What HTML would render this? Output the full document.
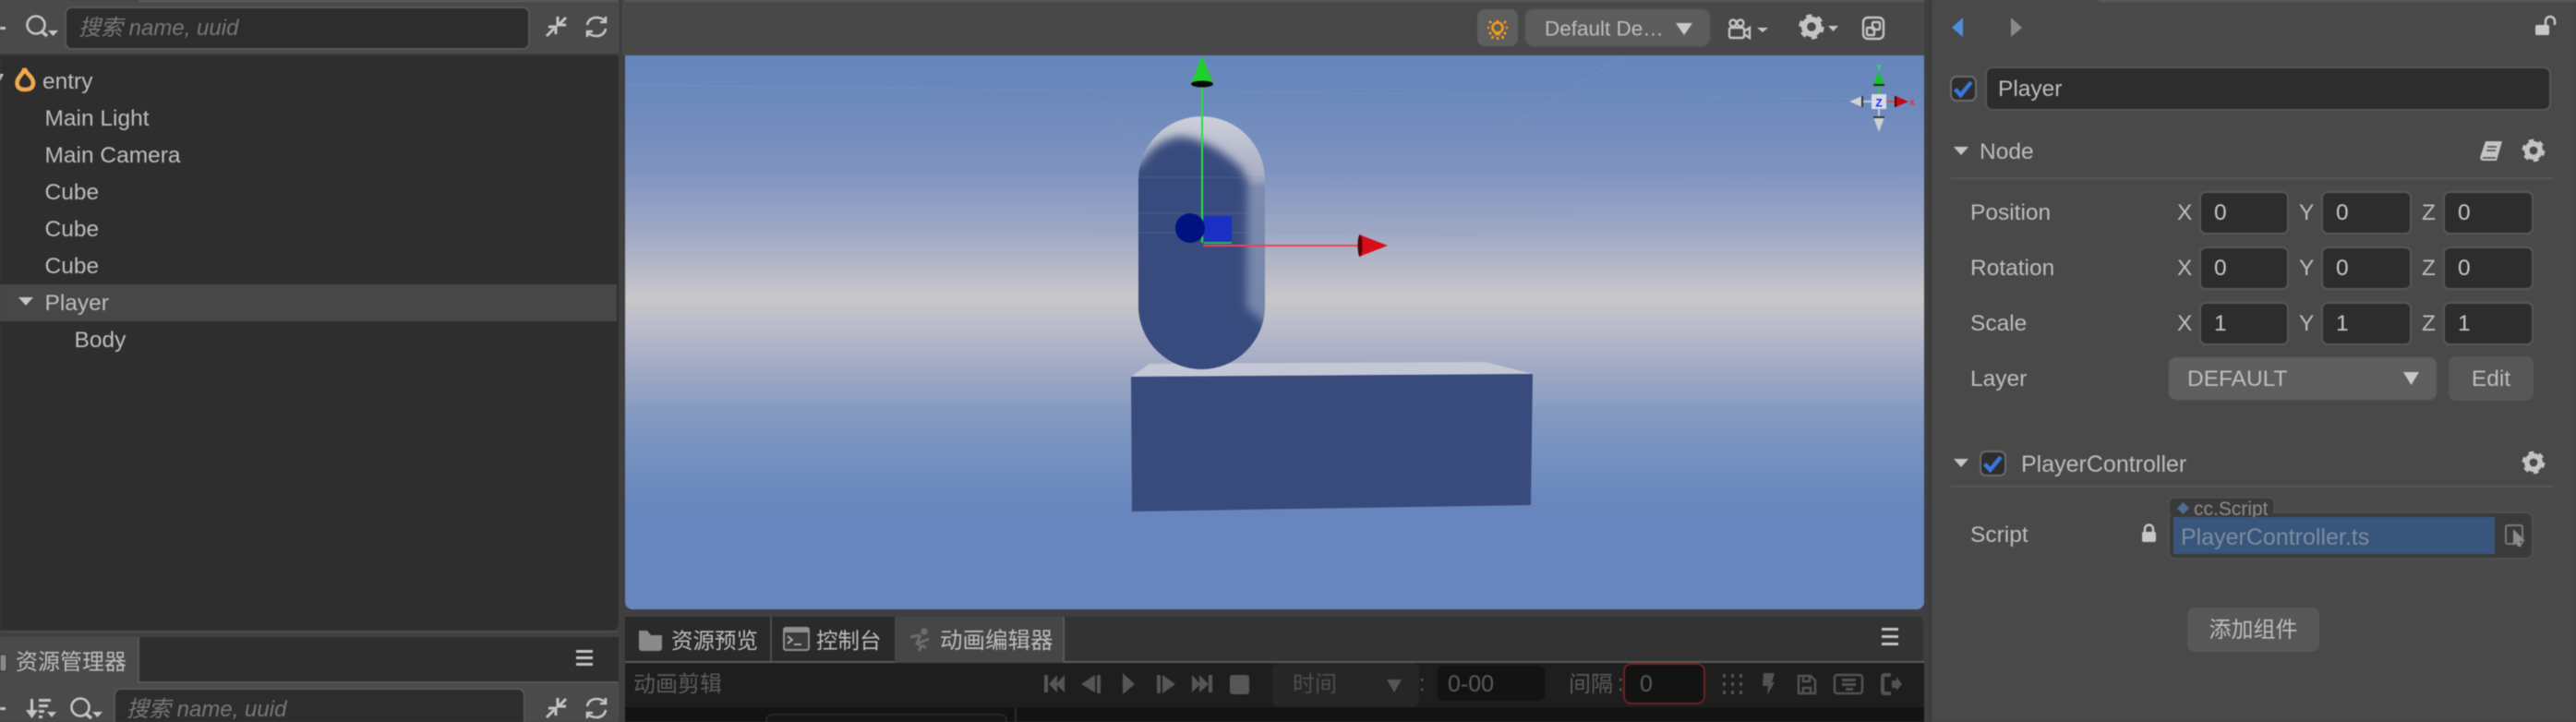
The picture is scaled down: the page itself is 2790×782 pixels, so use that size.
<!DOCTYPE html>
<html><head><meta charset="utf-8"><style>
html,body{margin:0;padding:0;background:#3f3f3f;width:2790px;height:782px;overflow:hidden}
svg{display:block;filter:blur(.55px)}
text{font-family:"Liberation Sans","Noto Sans CJK SC",sans-serif;font-size:24.5px;fill:#bdbdbd;white-space:pre}
.ph{font-size:24px;font-style:italic;fill:#777}
.dim{fill:#5a5a5a;font-size:24px}
.inp{fill:#2d2d2d;stroke:#575757;stroke-width:2}
</style></head><body>
<svg width="2790" height="782" viewBox="0 0 2790 782" xmlns="http://www.w3.org/2000/svg">
<defs>
<linearGradient id="sky" gradientUnits="userSpaceOnUse" x1="0" y1="60" x2="0" y2="660">
<stop offset="0" stop-color="#6586bd"/>
<stop offset=".07" stop-color="#6a88bc"/>
<stop offset=".205" stop-color="#7f93c0"/>
<stop offset=".317" stop-color="#9ea8c5"/>
<stop offset=".388" stop-color="#b8bac8"/>
<stop offset=".438" stop-color="#c8c8c8"/>
<stop offset=".483" stop-color="#bcbdca"/>
<stop offset=".55" stop-color="#a6adc6"/>
<stop offset=".65" stop-color="#8399c2"/>
<stop offset=".733" stop-color="#7390c0"/>
<stop offset=".817" stop-color="#6786bd"/>
<stop offset="1" stop-color="#6786bd"/>
</linearGradient>
<linearGradient id="capL" gradientUnits="userSpaceOnUse" x1="0" y1="126" x2="0" y2="345">
<stop offset="0" stop-color="#ced0d9"/>
<stop offset=".3" stop-color="#a8aec5"/>
<stop offset=".35" stop-color="#7e8dae"/>
<stop offset="1" stop-color="#7686aa"/>
</linearGradient>
<clipPath id="cap"><rect x="1233" y="126" width="137" height="274" rx="68.5"/></clipPath>
<filter id="b5" x="-20%" y="-20%" width="140%" height="140%"><feGaussianBlur stdDeviation="5"/></filter>
<clipPath id="sceneClip"><path d="M677 60H2084V652a8 8 0 0 1-8 8H685a8 8 0 0 1-8-8Z"/></clipPath>
<g id="gear"><circle r="7.2" fill="none" stroke="#c4c4c4" stroke-width="5.6"/><circle r="10.6" fill="none" stroke="#c4c4c4" stroke-width="3.6" stroke-dasharray="5.5 5.6"/></g>
<g id="collapse" fill="none" stroke="#c4c4c4" stroke-width="3"><path d="M1 21L9 13M3 11H11V19" /><path d="M22 1L14 9M22 9H13V0"/></g>
<g id="refresh" fill="none" stroke="#c4c4c4" stroke-width="2.6"><path d="M1 9C2 3 7 1 11 1C15 1 18 2 21 5M21 0V6H15"/><path d="M21 13C20 19 15 21 11 21C7 21 4 20 1 17M1 22V16H7"/></g>
<g id="cbox"><rect x="1" y="1" width="27" height="26" rx="6" fill="#2d2d2d" stroke="#6a6a6a" stroke-width="2"/><path d="M5.5 14.5L11.5 21L23 7" fill="none" stroke="#3a76dc" stroke-width="4.5"/></g>
</defs>

<rect width="2790" height="782" fill="#3f3f3f"/>

<!-- LEFT top panel -->
<rect x="0" y="0" width="670" height="59" fill="#4a4a4a"/>
<rect x="150" y="0" width="520" height="2" fill="#5c5c5c"/>
<rect x="0" y="59" width="670" height="624" fill="#2e2e2e"/>
<rect x="0" y="58" width="670" height="2" fill="#3c3c3c"/>
<path d="M662 683H670V675a8 8 0 0 1-8 8Z" fill="#3f3f3f"/>
<rect x="0" y="683" width="670" height="2" fill="#4b4b4b"/>
<rect x="0" y="29" width="6" height="3" fill="#c4c4c4"/>
<g fill="none" stroke="#c4c4c4" stroke-width="2.6"><circle cx="39" cy="27" r="9.5"/><path d="M45 34L51 39" stroke-width="3.5"/></g>
<path d="M52 33H63L57.5 39Z" fill="#c4c4c4"/>
<rect x="71" y="8" width="502" height="45" rx="7" class="inp"/>
<text x="85" y="38" class="ph">搜索 name, uuid</text>
<use href="#collapse" x="591" y="18"/>
<use href="#refresh" x="635" y="18"/>

<path d="M0 80H4L0 88Z" fill="#c4c4c4"/>
<path d="M26.500 74C26 80 18.500 83 18.500 90C18.500 95 22 97 27 97C32.500 97 36 95 36 90C36 83 28 80 26.500 74Z" fill="none" stroke="#f0a94c" stroke-width="4.600"/>
<text x="46" y="96">entry</text>
<text x="48.500" y="136">Main Light</text>
<text x="48.500" y="176">Main Camera</text>
<text x="48.500" y="216">Cube</text>
<text x="48.500" y="256">Cube</text>
<text x="48.500" y="296">Cube</text>
<rect x="0" y="308" width="668" height="40" fill="#474747"/>
<path d="M20 322H36L28 331Z" fill="#c4c4c4"/>
<text x="48.500" y="336">Player</text>
<text x="80.500" y="376">Body</text>

<!-- LEFT bottom panel -->
<rect x="0" y="690" width="670" height="49" fill="#2e2e2e"/>
<rect x="0" y="690" width="149" height="50" fill="#4a4a4a"/>
<rect x="149" y="690" width="2" height="50" fill="#575757"/>
<rect x="149" y="738" width="521" height="2" fill="#575757"/>
<rect x="0" y="740" width="670" height="42" fill="#4a4a4a"/>
<rect x="0" y="709" width="7" height="18" rx="2" fill="#8a8a8a" stroke="#333" stroke-width="1"/>
<text x="17" y="725" style="font-size:24px">资源管理器</text>
<g fill="#c4c4c4"><rect x="624" y="704" width="18" height="3"/><rect x="624" y="711" width="18" height="3"/><rect x="624" y="718" width="18" height="3"/></g>
<rect x="0" y="766" width="6" height="3" fill="#c4c4c4"/>
<g fill="#c4c4c4"><rect x="33" y="757" width="3" height="16"/><path d="M28 769H41L34.500 778Z"/><rect x="42" y="757" width="13" height="3"/><rect x="42" y="763" width="10" height="3"/><rect x="42" y="769" width="6" height="3"/><rect x="42" y="775" width="4" height="3"/><path d="M51 771H61L56 777Z"/></g>
<g fill="none" stroke="#c4c4c4" stroke-width="2.6"><circle cx="87" cy="766" r="9.500"/><path d="M93 773L99 778" stroke-width="3.5"/></g>
<path d="M100 771H111L105.500 777Z" fill="#c4c4c4"/>
<rect x="124" y="746" width="444" height="50" rx="7" class="inp"/>
<text x="137" y="776" class="ph">搜索 name, uuid</text>
<use href="#collapse" x="591" y="756"/>
<use href="#refresh" x="635" y="756"/>

<!-- CENTER toolbar -->
<rect x="677" y="0" width="1407" height="60" fill="#484848"/>
<rect x="677" y="0" width="1407" height="2" fill="#5a5a5a"/>
<rect x="674" y="0" width="3" height="60" fill="#4a4a4a"/>
<rect x="1600" y="10" width="44" height="40" rx="8" fill="#5e5e5e"/>
<g fill="none" stroke="#f39c1e" stroke-width="2.6"><circle cx="1622" cy="30" r="5.500"/><path d="M1619 37H1625M1611 30H1613M1631 30H1633M1613 23L1615 25M1631 23L1629 25M1613 37L1615 35M1631 37L1629 35M1622 22V24"/><path d="M1622 40V43M1617 39L1616 42M1627 39L1628 42"/></g>
<rect x="1652" y="10" width="200" height="40" rx="9" fill="#5d5d5d" stroke="#545454" stroke-width="2"/>
<text x="1673" y="38.500" style="font-size:22.500px">Default De…</text>
<path d="M1815 25H1833L1824 38Z" fill="#c8c8c8"/>
<g fill="none" stroke="#c4c4c4" stroke-width="2.400"><rect x="1873" y="30" width="16" height="11" rx="2"/><circle cx="1877" cy="25" r="3.500"/><circle cx="1885" cy="25" r="3.500"/><path d="M1889 34L1895 30V41L1889 37"/></g>
<path d="M1903 30H1915L1909 35Z" fill="#c4c4c4"/>
<g transform="translate(1962 29) scale(1.100)"><use href="#gear"/></g>
<path d="M1980 28H1991L1985.500 34Z" fill="#c4c4c4"/>
<g fill="none" stroke="#c4c4c4" stroke-width="2.400"><rect x="2018" y="19" width="22" height="23" rx="5"/><rect x="2028" y="24" width="8" height="8" rx="1"/><rect x="2022" y="30" width="8" height="8" rx="1"/></g>

<!-- SCENE -->
<g clip-path="url(#sceneClip)">
<rect x="677" y="60" width="1407" height="600" fill="url(#sky)"/>
<g stroke="#8e9ab8" stroke-width="1" fill="none" opacity=".35">
<path d="M677 92L2084 108"/>
<path d="M1760 60L1630 140"/>
<path d="M1180 95L1290 225"/>
<path d="M1180 191L2084 198"/>
<path d="M1180 231L1700 232"/>
<path d="M1180 251L1600 253"/>
</g>
<!-- box -->
<path d="M1225 408L1245 394L1608 392L1660 405Z" fill="#c4c8d4"/>
<path d="M1225 408L1660 405L1658 547L1226 554Z" fill="#384b7c"/>
<!-- capsule -->
<g clip-path="url(#cap)">
<rect x="1233" y="126" width="137" height="274" fill="url(#capL)"/>
<path d="M1200 430L1200 195L1235 178Q1252 150 1280 148Q1313 152 1345 183L1351 195L1350 333L1385 362L1385 430Z" fill="#384c7e" filter="url(#b5)"/>
</g>
<path d="M1233 192H1370M1233 231H1370M1233 252H1370" stroke="#6f7fa6" stroke-width="1" opacity=".35"/>
<!-- gizmo big -->
<path d="M1302 91V263" stroke="#23e043" stroke-width="2"/>
<path d="M1303 266H1473" stroke="#e6465a" stroke-width="2"/>
<path d="M1304 263H1334" stroke="#22c045" stroke-width="2"/>
<rect x="1304" y="234" width="30" height="28" fill="#1c2fc4"/>
<circle cx="1289" cy="247" r="16" fill="#00127f"/>
<path d="M1302 60L1314 91H1290Z" fill="#1fd02d"/>
<ellipse cx="1302" cy="91" rx="12" ry="3.500" fill="#0a0a0a"/>
<path d="M1472 254L1503 266L1472 278Z" fill="#d80d18"/>
<ellipse cx="1473" cy="266" rx="2.500" ry="12" fill="#5a0408"/>
<!-- view gizmo -->
<path d="M2035 92V102" stroke="#2fc74a" stroke-width="2"/>
<path d="M2043 110H2053" stroke="#c9505e" stroke-width="2"/>
<path d="M2017 110H2027M2035 118V127" stroke="#c3c8dc" stroke-width="2"/>
<path d="M2035 77L2041 92H2029Z" fill="#14c22c"/>
<rect x="2029" y="91" width="12" height="2" fill="#222"/>
<path d="M2053 104L2067 110L2053 116Z" fill="#c8061a"/>
<rect x="2052" y="104" width="2" height="12" fill="#3a0a0e"/>
<path d="M2017 104L2003 110L2017 116Z" fill="#d2d2d2"/>
<rect x="2016" y="104" width="2" height="12" fill="#333"/>
<path d="M2029 127L2041 127L2035 143Z" fill="#d0d0d0"/>
<rect x="2029" y="126" width="12" height="2" fill="#333"/>
<rect x="2027" y="102" width="16" height="16" fill="#d9dbe6"/>
<text x="2035" y="115.500" text-anchor="middle" style="font-family:'Liberation Mono',monospace;font-size:13px;font-weight:bold;fill:#1c35f0">Z</text>
<text x="2071" y="114" text-anchor="middle" style="font-family:'Liberation Mono',monospace;font-size:9px;font-weight:bold;fill:#ff1d2d">X</text>
<text x="2035" y="76" text-anchor="middle" style="font-family:'Liberation Mono',monospace;font-size:9px;font-weight:bold;fill:#30ef50">Y</text>
</g>

<!-- BOTTOM center panel -->
<path d="M677 717V675a7 7 0 0 1 7-7H2076a7 7 0 0 1 7 7V717Z" fill="#333"/>
<rect x="677" y="668" width="157" height="48" fill="#2a2a2a"/>
<rect x="834" y="668" width="2" height="48" fill="#4e4e4e"/>
<rect x="836" y="668" width="133" height="48" fill="#2a2a2a"/>
<rect x="969" y="668" width="182" height="50" fill="#464646"/>
<rect x="1151" y="668" width="2" height="50" fill="#5a5a5a"/>
<rect x="677" y="716" width="292" height="2" fill="#5a5a5a"/>
<rect x="1151" y="716" width="933" height="2" fill="#5a5a5a"/>
<rect x="677" y="718" width="1407" height="48" fill="#1e1e1e"/>
<rect x="677" y="766" width="1407" height="16" fill="#131313"/>
<path d="M1100 766V782" stroke="#2c2c2c" stroke-width="2"/>
<path d="M830 782V780a6 6 0 0 1 6-6H1084a6 6 0 0 1 6 6V782" fill="#161616" stroke="#262626" stroke-width="2"/>

<path d="M692 702V683H701L705 688H717V702a3 3 0 0 1-3 3H695a3 3 0 0 1-3-3Z" fill="#8a8a8a"/>
<text x="727" y="702" style="font-size:23.500px">资源预览</text>
<rect x="849" y="680" width="27" height="24" rx="2" fill="#3a3a3a" stroke="#8f8f8f" stroke-width="2"/>
<rect x="849" y="680" width="27" height="5" fill="#8f8f8f"/>
<path d="M853 689L858 693L853 697M860 698H868" fill="none" stroke="#b0b0b0" stroke-width="1.800"/>
<text x="884" y="702" style="font-size:23.500px">控制台</text>
<g fill="none" stroke="#6c6c6c" stroke-width="3"><circle cx="1001" cy="684" r="2.200" fill="#6c6c6c"/><path d="M997 688L993 697L998 700L995 705M993 697L1001 694L1006 692M986 690L996 688M999 699L1003 702"/></g>
<text x="1018" y="702">动画编辑器</text>
<g fill="#c4c4c4"><rect x="2038" y="680" width="18" height="3"/><rect x="2038" y="688" width="18" height="3"/><rect x="2038" y="696" width="18" height="3"/></g>

<text x="686" y="749" class="dim" style="fill:#5c5c5c">动画剪辑</text>
<g fill="#565656">
<rect x="1131" y="731" width="4" height="19"/><path d="M1136 741L1145 731V750Z"/><path d="M1144 741L1153 731V750Z"/>
<path d="M1171 741L1186 731V750Z"/><rect x="1188" y="731" width="4" height="20" rx="1"/>
<path d="M1216 729L1229 741L1216 752Z"/>
<rect x="1253" y="731" width="4" height="20" rx="1"/><path d="M1259 731L1273 741L1259 751Z"/>
<path d="M1291 731L1300 741L1291 750Z"/><path d="M1299 731L1309 741L1299 750Z"/><rect x="1309" y="731" width="4" height="19"/>
<rect x="1332" y="731" width="21" height="21" rx="3"/>
</g>
<rect x="1378" y="718" width="159" height="48" rx="8" fill="#262626"/>
<text x="1400" y="749" class="dim" style="fill:#4e4e4e">时间</text>
<path d="M1502 736H1518L1510 750Z" fill="#565656"/>
<text x="1537" y="748" class="dim">:</text>
<rect x="1556" y="720" width="118" height="40" rx="8" fill="#131313" stroke="#1d1d1d" stroke-width="2"/>
<text x="1568" y="749" class="dim" style="font-size:25px">0-00</text>
<text x="1699" y="749" class="dim">间隔</text>
<text x="1752" y="748" class="dim">:</text>
<rect x="1759" y="719" width="87" height="43" rx="8" fill="#131313" stroke="#6b2225" stroke-width="2"/>
<text x="1776" y="749" class="dim" style="font-size:25px">0</text>
<g fill="#535353">
<rect x="1866" y="730" width="3" height="4"/><rect x="1875" y="730" width="3" height="4"/><rect x="1884" y="730" width="3" height="4"/>
<rect x="1866" y="739" width="3" height="4"/><rect x="1875" y="739" width="3" height="4"/><rect x="1884" y="739" width="3" height="4"/>
<rect x="1866" y="748" width="3" height="4"/><rect x="1875" y="748" width="3" height="4"/><rect x="1884" y="748" width="3" height="4"/>
<path d="M1910 729H1922L1919 739H1922L1914 753L1915 743H1909Z"/>
<rect x="1995" y="735" width="15" height="3"/><rect x="1995" y="740" width="15" height="3"/><rect x="1999" y="745" width="8" height="3"/>
<path d="M2049 737H2054V733L2060 741L2054 748V745H2049Z"/>
</g>
<g fill="none" stroke="#535353" stroke-width="2.500">
<path d="M1948 732H1961L1966 737V751H1948Z"/><path d="M1953 732V738H1960V732M1953 751V745H1961V751"/>
<rect x="1987" y="731" width="30" height="20" rx="3"/>
<path d="M2048 731H2041a2 2 0 0 0-2 2V749a2 2 0 0 0 2 2H2048" stroke-width="4"/>
</g>

<!-- RIGHT panel -->
<rect x="2090" y="0" width="700" height="782" fill="#494949"/>
<rect x="2090" y="0" width="2" height="782" fill="#3c3c3c"/>
<rect x="2273" y="0" width="517" height="2" fill="#5c5c5c"/>
<path d="M2126 19V40L2114 30Z" fill="#4d8fdc"/>
<path d="M2178 19V40L2190 30Z" fill="#8a8a8a"/>
<rect x="2746" y="27" width="15" height="11" rx="2" fill="#c8c8c8"/>
<path d="M2757 27V23a5 5 0 0 1 10 0V27" fill="none" stroke="#c8c8c8" stroke-width="2.500"/>
<use href="#cbox" x="2112" y="82"/>
<rect x="2151" y="73" width="611" height="46" rx="7" class="inp"/>
<text x="2164" y="104">Player</text>

<path d="M2116 159H2132L2124 168Z" fill="#c4c4c4"/>
<text x="2144" y="172">Node</text>
<path d="M2692 153H2710L2704 174H2690a4 4 0 0 1-4-3Z" fill="#c4c4c4"/>
<path d="M2689 171H2703M2694 159H2704M2693 163H2703" stroke="#494949" stroke-width="1.500"/>
<use href="#gear" x="2744" y="163"/>
<rect x="2112" y="192" width="653" height="2" fill="#575757"/>

<text x="2134" y="238">Position</text>
<text x="2134" y="298">Rotation</text>
<text x="2134" y="358">Scale</text>
<text x="2134" y="418">Layer</text>

<g>
<text x="2358" y="238">X</text><rect x="2383" y="208" width="95" height="45" rx="6" class="inp"/><text x="2398" y="238" style="fill:#c8c8c8">0</text>
<text x="2490" y="238">Y</text><rect x="2515" y="208" width="96" height="45" rx="6" class="inp"/><text x="2530" y="238" style="fill:#c8c8c8">0</text>
<text x="2623" y="238">Z</text><rect x="2647" y="208" width="96" height="45" rx="6" class="inp"/><text x="2662" y="238" style="fill:#c8c8c8">0</text>

<text x="2358" y="298">X</text><rect x="2383" y="268" width="95" height="45" rx="6" class="inp"/><text x="2398" y="298" style="fill:#c8c8c8">0</text>
<text x="2490" y="298">Y</text><rect x="2515" y="268" width="96" height="45" rx="6" class="inp"/><text x="2530" y="298" style="fill:#c8c8c8">0</text>
<text x="2623" y="298">Z</text><rect x="2647" y="268" width="96" height="45" rx="6" class="inp"/><text x="2662" y="298" style="fill:#c8c8c8">0</text>

<text x="2358" y="358">X</text><rect x="2383" y="328" width="95" height="45" rx="6" class="inp"/><text x="2398" y="358" style="fill:#c8c8c8">1</text>
<text x="2490" y="358">Y</text><rect x="2515" y="328" width="96" height="45" rx="6" class="inp"/><text x="2530" y="358" style="fill:#c8c8c8">1</text>
<text x="2623" y="358">Z</text><rect x="2647" y="328" width="96" height="45" rx="6" class="inp"/><text x="2662" y="358" style="fill:#c8c8c8">1</text>
</g>

<rect x="2349" y="387" width="290" height="46" rx="8" fill="#5f5f5f" stroke="#555" stroke-width="1"/>
<text x="2369" y="418">DEFAULT</text>
<path d="M2603 403H2620L2611.500 417Z" fill="#c8c8c8"/>
<rect x="2652" y="386" width="92" height="48" rx="8" fill="#575757"/>
<text x="2698" y="418" text-anchor="middle">Edit</text>

<path d="M2116 497H2132L2124 506Z" fill="#c4c4c4"/>
<use href="#cbox" x="2144" y="488"/>
<text x="2189" y="511" style="font-size:25px">PlayerController</text>
<use href="#gear" x="2744" y="501"/>
<rect x="2112" y="526" width="653" height="2" fill="#575757"/>

<text x="2134" y="587">Script</text>
<rect x="2320" y="576" width="15" height="11" rx="2" fill="#c8c8c8"/>
<path d="M2323 577V573a4.500 4.500 0 0 1 9 0V577" fill="none" stroke="#c8c8c8" stroke-width="2.400"/>
<path d="M2349 556V545a6 6 0 0 1 6-6H2457a6 6 0 0 1 6 6V556Z" fill="#3a3a3a" stroke="#505050" stroke-width="1.500"/>
<rect x="2349" y="555" width="394" height="50" rx="7" fill="#3a3a3a" stroke="#505050" stroke-width="2"/>
<rect x="2350" y="553" width="112" height="4" fill="#3a3a3a"/>
<path d="M2364.500 544L2371 550.500L2364.500 557L2358 550.500Z" fill="#4f6c93"/>
<text x="2376" y="558" style="font-size:21px;fill:#8c8c8c">cc.Script</text>
<rect x="2354" y="560" width="348" height="40" fill="#38557c"/>
<text x="2362" y="590" style="font-size:25px;fill:#7d8ca0">PlayerController.ts</text>
<rect x="2714" y="569" width="18" height="20" rx="2" fill="none" stroke="#7a7a7a" stroke-width="2"/>
<path d="M2722 573L2735 586L2729 586L2731 592L2727 592L2725 587L2722 590Z" fill="#8c8c8c"/>

<rect x="2369" y="658" width="143" height="48" rx="8" fill="#575757"/>
<text x="2440.500" y="690" text-anchor="middle" style="font-size:24px">添加组件</text>
</svg>
</body></html>
